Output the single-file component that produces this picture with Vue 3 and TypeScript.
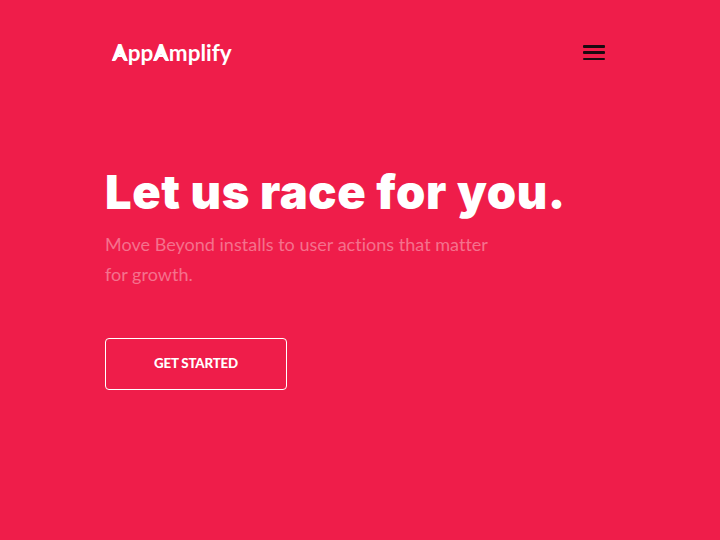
<script setup lang="ts">
const title = 'Let us race for you.'
</script>

<template>
  <div class="page">
    <header class="nav">
      <div class="logo"><span class="a">A</span>pp<span class="a">A</span>mplify</div>
      <button class="burger" aria-label="Menu">
        <span></span><span></span><span></span>
      </button>
    </header>
    <main class="hero">
      <h1>{{ title }}</h1>
      <p>Move Beyond installs to user actions that matter<br />for growth.</p>
      <a class="cta">GET STARTED</a>
    </main>
  </div>
</template>

<style>
html, body { margin: 0; background: #ef1d4a; }
</style>

<style scoped>
.page {
  width: 720px;
  height: 540px;
  background: #ef1d4a;
  box-sizing: border-box;
  padding: 0 105px;
  overflow: hidden;
  font-family: "Lato", sans-serif;
}
.nav {
  height: 105px;
  display: flex;
  justify-content: space-between;
  align-items: center;
  padding: 0 115px 0 7px;
  box-sizing: border-box;
  margin-right: -105px;
}
.logo {
  font-size: 22.5px;
  font-weight: 700;
  color: #fff;
  line-height: 30px;
}
.a { position: relative; display: inline-block; }
.a::before {
  content: "";
  position: absolute;
  left: 0;
  right: 0;
  top: 7px;
  height: 16px;
  background: #fff;
  clip-path: polygon(50% 0, 100% 100%, 76% 100%, 50% 60%, 24% 100%, 0 100%);
}
.burger {
  width: 22px;
  height: 15px;
  padding: 0;
  border: 0;
  background: none;
  display: flex;
  flex-direction: column;
  justify-content: space-between;
}
.burger span {
  display: block;
  height: 2.5px;
  background: #1a0a10;
  border-radius: 1px;
}
.hero { padding-top: 57px; }
h1 {
  margin: 0;
  font-family: "Inter", sans-serif;
  font-size: 47px;
  line-height: 60px;
  font-weight: 900;
  letter-spacing: 0.6px;
  color: #fff;
  white-space: nowrap;
}
p {
  margin: 7px 0 0;
  font-size: 18px;
  line-height: 30px;
  font-weight: 400;
  letter-spacing: 0.02px;
  color: rgba(255, 255, 255, 0.38);
}
.cta {
  margin-top: 49px;
  display: flex;
  align-items: center;
  justify-content: center;
  width: 182px;
  height: 52px;
  padding-bottom: 3px;
  box-sizing: border-box;
  border: 1px solid #fff;
  border-radius: 4px;
  color: #fff;
  font-size: 13.3px;
  font-weight: 900;
  letter-spacing: -0.2px;
}
</style>
